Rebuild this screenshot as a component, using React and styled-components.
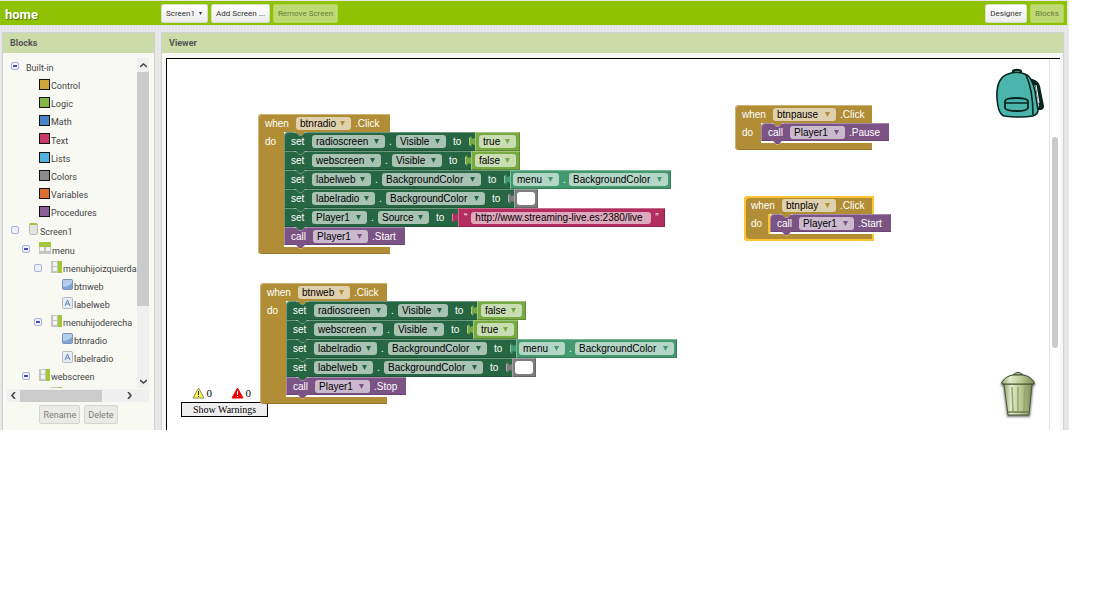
import React from "react";
import styled, { createGlobalStyle, css } from "styled-components";

const Global = createGlobalStyle`
  * { box-sizing: border-box; }
  body { margin: 0; background: #fff; font-family: Roboto, "Liberation Sans", sans-serif; }
  button, select, input { font-family: inherit; margin: 0; padding: 0; border: 0; background: none; color: inherit; }
  ul { list-style: none; margin: 0; padding: 0; }
`;

const Page = styled.main`
  margin-right: 24px;
  padding-top: 1px;
  background-color: #e6e6e6;
  background-image:
    repeating-linear-gradient(90deg, rgba(255,255,255,.2) 0 1px, transparent 1px 3px),
    repeating-linear-gradient(0deg, rgba(200,200,200,.15) 0 1px, transparent 1px 4px);
`;

const TopBar = styled.header`
  display: flex;
  align-items: center;
  gap: 3px;
  height: 24px;
  margin-right: 2px;
  padding: 0 3px 0 5px;
  background: #8fc202;
`;

const ProjectName = styled.h1`
  width: 153px;
  margin: 0;
  padding-top: 4px;
  font-size: 13px;
  line-height: 18px;
  color: #fff;
  text-shadow: 1px 1px 1px rgba(60,90,0,.7);
`;

const barItem = css`
  height: 19px;
  border-radius: 2px;
  border: 1px solid #d8dccb;
  font-size: 8px;
  line-height: 17px;
  text-align: center;
  white-space: nowrap;
  color: #333;
  background: linear-gradient(#fff, #ececec);
`;

const BarButton = styled.button`
  ${barItem}
  padding: 0 2px;
  min-width: ${(p) => p.$w}px;
  margin-left: ${(p) => (p.$push ? "auto" : "0")};
  &:disabled { background: #bfd975; border-color: #b4d45c; color: #64803a; }
`;

const ScreenPicker = styled.div`
  position: relative;
  color: #333;
  select { ${barItem} width: 47px; padding-left: 4px; appearance: none; text-align: left; display: block; }
  svg { position: absolute; right: 6px; top: 8px; pointer-events: none; }
`;

const Columns = styled.div`
  display: flex;
  gap: 6px;
  padding: 7px 5px 0 2px;
`;

const Panel = styled.section`
  display: flex;
  flex-direction: column;
  min-width: 0;
  flex: ${(p) => (p.$grow ? "1" : "0 0 153px")};
  border: 1px solid #d2d2d6;
  border-bottom: 0;
  background: #f8f9f3;
`;

const PanelTitle = styled.h2`
  margin: 0;
  height: 20px;
  padding-left: 7px;
  font-size: 9px;
  line-height: 21px;
  color: #555;
  background: #ccdca9;
`;

/* ---------- sidebar ---------- */

const TreeFrame = styled.div`
  display: grid;
  grid-template-columns: 1fr 12px;
  grid-template-rows: 330px 14px;
  margin: 5px 5px 0 4px;
`;

const Tree = styled.ul`
  overflow: hidden;
  font-size: 9px;
  color: #444;
`;

const TreeRow = styled.li`
  display: flex;
  align-items: center;
  height: ${(p) => (p.$tall ? 19 : 18)}px;
  padding-left: ${(p) => p.$indent}px;
`;

const Toggle = styled.button`
  flex: none;
  width: 8px;
  height: 8px;
  margin-right: ${(p) => p.$gap}px;
  margin-bottom: 3px;
  border: 1px solid #a9b3de;
  border-radius: 2px;
  background: #eef0fb;
  display: grid;
  place-items: center;
  &::after { content: ""; width: 4px; height: ${(p) => (p.$open ? 2 : 0)}px; background: #4a4ac4; }
`;

const Swatch = styled.span`
  width: 11px;
  height: 11px;
  margin-bottom: 4px;
  margin-right: 1px;
  border: 1px solid #111;
  background: ${(p) => p.$color};
`;

const TreeIcon = styled.svg`
  flex: none;
  margin-bottom: 5px;
  margin-right: 1px;
`;

const TreeLabel = styled.button`
  font-size: 9px;
  line-height: 18px;
  white-space: nowrap;
`;

const VScroll = styled.div`
  display: flex;
  flex-direction: column;
  align-items: center;
  background: #f0f0f0;
  i { width: 12px; height: 234px; margin-bottom: auto; background: #cbcbcb; }
  svg { margin: 4px 0 3px; }
`;

const HScroll = styled.div`
  grid-column: 1 / 3;
  display: flex;
  align-items: center;
  background: #f0f0f0;
  margin-top: 1px;
  i { width: 82px; height: 12px; background: #cbcbcb; }
  svg { margin: 0 3px; }
  svg:last-child { margin: 0 0 0 24px; }
`;

const Actions = styled.div`
  display: flex;
  justify-content: center;
  gap: 4px;
  padding: 3px 0 6px;
  button {
    height: 19px;
    padding: 0 3px;
    border: 1px solid #d4d4d0;
    border-radius: 2px;
    background: #eaeae6;
    font-size: 9px;
    color: #808080;
  }
`;

/* ---------- workspace ---------- */

const Canvas = styled.div`
  position: relative;
  flex: 1;
  margin: 5px 3px 0 4px;
  border-top: 1px solid #000;
  border-left: 1px solid #000;
  background: #fff;
  overflow: hidden;
  font-family: "Liberation Sans", Arial, sans-serif;
`;

const ScrollGutter = styled.div`
  position: absolute;
  top: 0;
  right: 0;
  bottom: 0;
  width: 11px;
  padding: 78px 0 0 2px;
  border-left: 1px solid #e2e2e2;
  i { display: block; width: 6px; height: 211px; border-radius: 3px; background: #cbcbcb; }
`;

const Pinned = styled.svg`
  position: absolute;
  right: ${(p) => p.$right}px;
  top: ${(p) => p.$top}px;
`;

const Warnings = styled.div`
  position: absolute;
  left: 14px;
  top: 327px;
  width: 87px;
  font-family: "Liberation Serif", serif;
  color: #000;
  button {
    display: block;
    width: 100%;
    height: 15px;
    border: 1px solid #000;
    background: #eee;
    font-size: 10px;
    line-height: 12px;
  }
`;

const Counts = styled.div`
  display: flex;
  gap: 19px;
  height: 16px;
  padding: 1px 0 0 11px;
  font-size: 11px;
  line-height: 13px;
  span { display: flex; gap: 2px; width: 20px; }
`;

const GOLD = "#b18e35";
const GREEN = "#266643";
const TEAL = "#439970";
const LIME = "#77ab41";
const PINK = "#b32d5e";
const PURPLE = "#7c5385";
const GREY = "#7d7d7d";
const GLOW = "#fdc52f";

const EventShell = styled.article`
  position: absolute;
  left: ${(p) => p.$x}px;
  top: ${(p) => p.$y}px;
  font-size: 10px;
  color: #fff;
`;

const EventHead = styled.div`
  position: relative;
  display: flex;
  align-items: center;
  width: ${(p) => p.$w}px;
  height: 18px;
  padding-top: 1px;
  background: ${GOLD};
  border-radius: 4px 0 0 0;
  box-shadow: ${(p) => (p.$on ? `inset 2px 2px ${GLOW}, inset -2px 0 ${GLOW}` : "inset 1px 1px #cdb377")};
`;

const EventBody = styled.div`
  display: flex;
`;

const Spine = styled.div`
  width: 26px;
  padding: 3px 0 0 7px;
  line-height: 13px;
  background: ${GOLD};
  box-shadow: ${(p) => (p.$on ? `inset 2px 0 ${GLOW}, inset -2px 0 ${GLOW}` : "inset 1px 0 #cdb377")};
`;

const Stack = styled.div`
  display: flex;
  flex-direction: column;
  align-items: flex-start;
  padding-bottom: 2px;
`;

const EventFoot = styled.div`
  width: ${(p) => p.$w}px;
  height: 7px;
  background: ${GOLD};
  border-radius: 0 0 0 4px;
  box-shadow: ${(p) => (p.$on ? `inset 2px -2px ${GLOW}, inset -2px 0 ${GLOW}` : "inset 1px 0 #cdb377, inset 0 -1px #97782c")};
`;

const Command = styled.div`
  position: relative;
  display: flex;
  align-items: center;
  height: ${(p) => (p.$last ? 18 : 19)}px;
  padding-right: ${(p) => p.$pad || 0}px;
  background: ${(p) => p.$color};
  box-shadow: inset 1px 1px rgba(255,255,255,.32), inset 0 -1px rgba(0,0,0,.15);
  &:first-child { border-top-left-radius: 4px; }
`;

const Bump = styled.svg`
  position: absolute;
  z-index: 1;
  left: ${(p) => p.$left}px;
  top: 100%;
  margin-top: -1px;
`;

const Word = styled.span`
  flex: none;
  width: ${(p) => p.$w}px;
  padding-left: ${(p) => p.$pad}px;
  white-space: nowrap;
`;

const PickBox = styled.span`
  position: relative;
  display: block;
  flex: none;
  width: ${(p) => p.$w}px;
  height: 13px;
  border-radius: 3px;
  background: ${(p) => p.$tint};
  color: #000;
  select { display: block; width: 100%; height: 13px; padding-left: 4px; appearance: none; font-size: 10px; line-height: 13px; }
  svg { position: absolute; right: 6px; top: 4px; pointer-events: none; }
`;

const Value = styled.span`
  position: relative;
  display: flex;
  align-items: center;
  height: 19px;
  padding: 0 ${(p) => p.$pad || 4}px;
  background: ${(p) => p.$color};
  box-shadow: inset 1px 1px rgba(255,255,255,.3), inset -1px -1px rgba(0,0,0,.18);
`;

const Plug = styled.svg`
  position: absolute;
  right: 100%;
  top: 4px;
`;

const UrlField = styled.input`
  && {
    width: 180px;
    height: 12px;
    margin: 0 4px;
    padding: 0 4px;
    border-radius: 3px;
    background: #dfa9bd;
    color: #000;
    font-size: 10px;
  }
`;

const ColorField = styled.button`
  && { width: 18px; height: 13px; border-radius: 3px; background: #fff; }
`;

const TINTS = { [GOLD]: "#e0d1ae", [GREEN]: "#a8c2b4", [TEAL]: "#b4d6c6", [LIME]: "#c9ddb3", [PURPLE]: "#cbbace" };

const FIELD_WIDTHS = {
  radioscreen: 73, webscreen: 69, labelweb: 59, labelradio: 63, Player1: 55,
  Visible: 50, Source: 51, BackgroundColor: 99, menu: 46, true: 37, false: 41,
  btnradio: 55, btnweb: 52, btnpause: 63, btnplay: 54,
};

function Pick({ value, color }) {
  return (
    <PickBox $w={FIELD_WIDTHS[value]} $tint={TINTS[color]}>
      <select aria-label={value} defaultValue={value}><option>{value}</option></select>
      <svg width="5" height="5"><path d="M0 0H5L2.5 5Z" fill={color} /></svg>
    </PickBox>
  );
}

function Notch({ color, left = 10 }) {
  return (
    <Bump $left={left} width="13" height="6">
      <path d="M0 0H13L11 1L8 4H5L2 1Z" fill={color} />
      <path d="M0 1.5H2L5 4.5H8L11 1.5H13" fill="none" stroke="rgba(255,255,255,.3)" />
    </Bump>
  );
}

function Socket({ color }) {
  return (
    <Plug width="6" height="11">
      <path d="M6 2L3 3L2 0L0 2V9L2 11L3 8L6 9Z" fill={color} />
      <path d="M0.5 2V9" stroke="rgba(255,255,255,.4)" />
    </Plug>
  );
}

function SetValue({ value }) {
  if (value === "true" || value === "false")
    return <Value $color={LIME}><Socket color={LIME} /><Pick value={value} color={LIME} /></Value>;
  if (value === "menu")
    return (
      <Value $color={TEAL} $pad={3}>
        <Socket color={TEAL} />
        <Pick value="menu" color={TEAL} />
        <Word $w={10} $pad={4}>.</Word>
        <Pick value="BackgroundColor" color={TEAL} />
      </Value>
    );
  if (value === "white")
    return <Value $color={GREY} $pad={3}><Socket color={GREY} /><ColorField aria-label="White" /></Value>;
  return (
    <Value $color={PINK} $pad={6}>
      <Socket color={PINK} />“<UrlField aria-label="Source address" defaultValue={value} />”
    </Value>
  );
}

function SetRow({ target, property, value }) {
  return (
    <Command $color={GREEN}>
      <Word $w={28} $pad={7}>set</Word>
      <Pick value={target} color={GREEN} />
      <Word $w={11} $pad={4}>.</Word>
      <Pick value={property} color={GREEN} />
      <Word $w={29} $pad={7}>to</Word>
      <SetValue value={value} />
      <Notch color={GREEN} />
    </Command>
  );
}

function EventBlock({ x, y, w, name, rows = [], method, selected }) {
  return (
    <EventShell $x={x} $y={y}>
      <EventHead $w={w} $on={selected}>
        <Word $w={38} $pad={7}>when</Word>
        <Pick value={name} color={GOLD} />
        <Word $w={30} $pad={4}>.Click</Word>
        <Notch color={GOLD} left={36} />
      </EventHead>
      <EventBody>
        <Spine $on={selected}>do</Spine>
        <Stack>
          {rows.map(([target, property, value], i) => (
            <SetRow key={i} target={target} property={property} value={value} />
          ))}
          <Command $color={PURPLE} $last $pad={9}>
            <Word $w={29} $pad={7}>call</Word>
            <Pick value="Player1" color={PURPLE} />
            <Word $pad={4}>{method}</Word>
            <Notch color={PURPLE} />
          </Command>
        </Stack>
      </EventBody>
      <EventFoot $w={w} $on={selected} />
    </EventShell>
  );
}

function NodeIcon({ kind }) {
  if (kind === "screen")
    return (
      <TreeIcon width="10" height="12">
        <rect x=".5" y=".5" width="8" height="11" rx="1" fill="#e3e3e0" stroke="#bdbdb8" />
        <path d="M1 0H8V2H1Z" fill="#a4c639" />
      </TreeIcon>
    );
  if (kind === "horizontal")
    return (
      <TreeIcon width="12" height="12">
        <rect width="12" height="12" fill="#a4c639" />
        <path d="M0 5H12V12H0Z" fill="#c4c6c1" />
        <rect x="1" y="5" width="4" height="4" rx="1" fill="#f4f4f4" />
        <rect x="7" y="5" width="4" height="4" rx="1" fill="#f4f4f4" />
      </TreeIcon>
    );
  if (kind === "vertical")
    return (
      <TreeIcon width="11" height="12">
        <rect width="11" height="12" fill="#a4c639" />
        <path d="M0 0H7V12H0Z" fill="#c4c6c1" />
        <rect x="2" y="1" width="4" height="4" rx="1" fill="#f4f4f4" />
        <rect x="2" y="6" width="4" height="4" rx="1" fill="#f4f4f4" />
      </TreeIcon>
    );
  if (kind === "button")
    return (
      <TreeIcon width="11" height="11">
        <rect x=".5" y=".5" width="10" height="10" rx="1" fill="#7fa5d6" stroke="#7e93b3" />
        <path d="M1 1H10V4Q6 8 1 8Z" fill="#b4cdec" />
      </TreeIcon>
    );
  return (
    <TreeIcon width="11" height="12">
      <rect x=".5" y=".5" width="10" height="11" rx="1" fill="#e9edf3" stroke="#b5b9c0" />
      <path d="M3 9L5.5 3L8 9M4 7H7" fill="none" stroke="#5f86bd" />
    </TreeIcon>
  );
}

const DRAWERS = [
  ["Control", "#cfa53a"], ["Logic", "#84b846"], ["Math", "#4783c9"], ["Text", "#c93a6b", true],
  ["Lists", "#4fb3dd"], ["Colors", "#8b8b8b"], ["Variables", "#dd7030"], ["Procedures", "#8a5f96"],
];

const NODES = [
  { label: "Screen1", kind: "screen", indent: 4, gap: 10, tall: true },
  { label: "menu", kind: "horizontal", indent: 15, gap: 9, tall: true, open: true },
  { label: "menuhijoizquierda", kind: "vertical", indent: 27, gap: 9 },
  { label: "btnweb", kind: "button", indent: 55 },
  { label: "labelweb", kind: "label", indent: 55 },
  { label: "menuhijoderecha", kind: "vertical", indent: 27, gap: 9, open: true },
  { label: "btnradio", kind: "button", indent: 55 },
  { label: "labelradio", kind: "label", indent: 55 },
  { label: "webscreen", kind: "vertical", indent: 15, gap: 9, open: true },
  { label: "", kind: "vertical", indent: 44 },
];

const Chevron = ({ d }) => (
  <svg width="7" height="7"><path d={d} fill="none" stroke="#444" strokeWidth="1.6" /></svg>
);

function Sidebar() {
  return (
    <Panel>
      <PanelTitle>Blocks</PanelTitle>
      <TreeFrame>
        <Tree>
          <TreeRow $tall $indent={4}>
            <Toggle $open $gap={7} aria-label="Collapse" />
            <TreeLabel>Built-in</TreeLabel>
          </TreeRow>
          {DRAWERS.map(([label, color, tall]) => (
            <TreeRow key={label} $tall={tall} $indent={32}>
              <Swatch $color={color} />
              <TreeLabel>{label}</TreeLabel>
            </TreeRow>
          ))}
          {NODES.map((n, i) => (
            <TreeRow key={i} $tall={n.tall} $indent={n.indent}>
              {n.gap && <Toggle $open={n.open} $gap={n.gap} aria-label="Expand" />}
              <NodeIcon kind={n.kind} />
              {n.label && <TreeLabel>{n.label}</TreeLabel>}
            </TreeRow>
          ))}
        </Tree>
        <VScroll><Chevron d="M0 5L3.5 2L7 5" /><i /><Chevron d="M0 2L3.5 5L7 2" /></VScroll>
        <HScroll><Chevron d="M5 0L2 3.500L5 7" /><i /><Chevron d="M2 0L5 3.500L2 7" /></HScroll>
      </TreeFrame>
      <Actions>
        <button disabled>Rename</button>
        <button disabled>Delete</button>
      </Actions>
    </Panel>
  );
}

function WarningSign({ fill, stroke }) {
  return (
    <svg width="13" height="12">
      <path d="M6.500 1L12 11H1Z" fill={fill} stroke={stroke} />
      <path d="M6.500 4V8M6.500 9V10" stroke={stroke === "#f00000" ? "#fff" : "#333"} />
    </svg>
  );
}

function Backpack() {
  return (
    <Pinned $right={15} $top={9} width="49" height="51" viewBox="0 0 49 51">
      <path d="M32 10Q42 11 44 18L48 38Q48 41 45 42H40L43 38L39 18L33 12Z" fill="#06251f" />
      <path d="M40 17L43 35" stroke="#fff" strokeWidth="1" />
      <path d="M17 4Q17 2 21 2Q25 2 25 4" fill="none" stroke="#06251f" strokeWidth="2.500" />
      <path d="M1 30Q0 10 12 6Q22 2 31 7Q36 10 39 23L42 42Q42 46 37 48Q24 50 8 48Q2 46 1 30Z" fill="#4cb5ab" stroke="#06251f" strokeWidth="1.600" />
      <path d="M30 7Q37 22 37 47" fill="none" stroke="#06251f" strokeWidth="1.600" />
      <path d="M9 33Q10 30 20 30Q31 30 32 33V40Q31 43 21 43Q10 43 9 40Z" fill="#4cb5ab" stroke="#06251f" strokeWidth="1.800" />
      <path d="M9 35H32" fill="none" stroke="#06251f" strokeWidth="1.500" />
    </Pinned>
  );
}

function Trash() {
  return (
    <Pinned $right={23} $top={311} width="38" height="50" viewBox="0 0 38 50">
      <defs>
        <linearGradient id="can">
          <stop offset="0" stopColor="#94a574" />
          <stop offset=".25" stopColor="#e3ecca" />
          <stop offset=".6" stopColor="#b9cb92" />
          <stop offset="1" stopColor="#7c8d5a" />
        </linearGradient>
        <filter id="halo" x="-20%" y="-20%" width="140%" height="140%"><feGaussianBlur stdDeviation="1.2" /></filter>
      </defs>
      <path d="M2 13Q8 6 15 5Q19 0 24 5Q31 6 36 13V16H34L31 47H8L4 16H2Z" fill="#777" filter="url(#halo)" />
      <path d="M5 14H33L30 45H9Z" fill="url(#can)" stroke="#4e5a35" strokeWidth="1" />
      <path d="M13 17L14 41M19 17V41M26 17L25 41" stroke="#93a571" strokeWidth="1.500" />
      <path d="M9 42H30" fill="none" stroke="#6d7c50" strokeWidth="1.500" />
      <path d="M14 5Q19 0 24 5Z" fill="#b8c895" stroke="#3f4a2b" />
      <path d="M3 12Q7 6 14 5H24Q31 6 35 12V14H3Z" fill="url(#can)" stroke="#3f4a2b" />
    </Pinned>
  );
}

const RADIO_ROWS = [
  ["radioscreen", "Visible", "true"],
  ["webscreen", "Visible", "false"],
  ["labelweb", "BackgroundColor", "menu"],
  ["labelradio", "BackgroundColor", "white"],
  ["Player1", "Source", "http://www.streaming-live.es:2380/live"],
];

const WEB_ROWS = [
  ["radioscreen", "Visible", "false"],
  ["webscreen", "Visible", "true"],
  ["labelradio", "BackgroundColor", "menu"],
  ["labelweb", "BackgroundColor", "white"],
];

export default function App() {
  return (
    <>
      <Global />
      <Page>
        <TopBar>
          <ProjectName>home</ProjectName>
          <ScreenPicker>
            <select aria-label="Screen" defaultValue="Screen1"><option>Screen1</option></select>
            <svg width="3" height="3"><path d="M0 0H3L1.5 3Z" fill="#333" /></svg>
          </ScreenPicker>
          <BarButton $w={59}>Add Screen ...</BarButton>
          <BarButton $w={65} disabled>Remove Screen</BarButton>
          <BarButton $w={42} $push>Designer</BarButton>
          <BarButton $w={34} disabled>Blocks</BarButton>
        </TopBar>
        <Columns>
          <Sidebar />
          <Panel $grow>
            <PanelTitle>Viewer</PanelTitle>
            <Canvas>
              <Warnings>
                <Counts>
                  <span><WarningSign fill="#fbf34a" stroke="#8a8a6a" />0</span>
                  <span><WarningSign fill="#f00000" stroke="#f00000" />0</span>
                </Counts>
                <button>Show Warnings</button>
              </Warnings>
              <EventBlock x={91} y={55} w={132} name="btnradio" rows={RADIO_ROWS} method=".Start" />
              <EventBlock x={93} y={224} w={127} name="btnweb" rows={WEB_ROWS} method=".Stop" />
              <EventBlock x={568} y={46} w={137} name="btnpause" method=".Pause" />
              <EventBlock x={577} y={137} w={130} name="btnplay" method=".Start" selected />
              <Backpack />
              <Trash />
              <ScrollGutter><i /></ScrollGutter>
            </Canvas>
          </Panel>
        </Columns>
      </Page>
    </>
  );
}
